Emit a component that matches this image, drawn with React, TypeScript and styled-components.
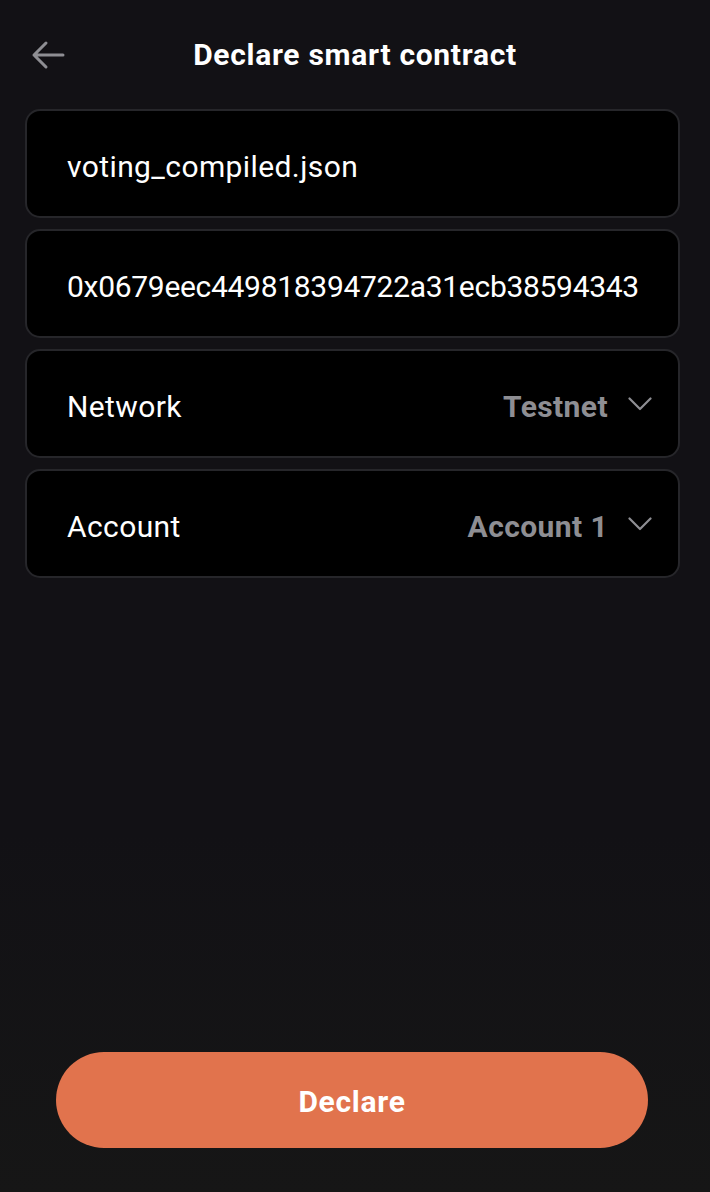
import React from "react";
import styled, { createGlobalStyle } from "styled-components";

const Global = createGlobalStyle`
  html, body { margin: 0; padding: 0; background: #121115; }
  body { font-family: "Roboto", "Inter", sans-serif; }
`;

const Page = styled.div`
  width: 710px;
  height: 1192px;
  box-sizing: border-box;
  display: flex;
  flex-direction: column;
  background: linear-gradient(180deg, #121115 0%, #121115 70%, #161616 100%);
  color: #fff;
`;

const Header = styled.header`
  height: 109px;
  display: grid;
  grid-template-columns: 96px 1fr 96px;
  align-items: center;
`;

const BackButton = styled.button`
  background: none;
  border: none;
  padding: 0 0 0 31px;
  display: flex;
  align-items: center;
  color: #8e8e93;
  cursor: pointer;
`;

const Title = styled.h1`
  margin: 0;
  text-align: center;
  font-size: 30px;
  font-weight: 700;
  letter-spacing: 0.7px;
  color: #fff;
`;

const Fields = styled.div`
  display: flex;
  flex-direction: column;
  gap: 11px;
  padding: 0 30px 0 25px;
`;

const Card = styled.div<{ $tight?: boolean }>`
  height: 109px;
  box-sizing: border-box;
  background: #000;
  border: 2px solid #26262a;
  border-radius: 15px;
  display: flex;
  align-items: center;
  justify-content: space-between;
  padding: 5px 26px 0 40px;
  font-size: 30px;
  letter-spacing: ${(p) => (p.$tight ? "-0.3px" : "0.4px")};
  color: #fff;
`;

const Value = styled.span<{ $muted?: boolean }>`
  display: flex;
  align-items: center;
  gap: 20px;
  font-weight: ${(p) => (p.$muted ? 700 : 400)};
  color: ${(p) => (p.$muted ? "#8e8e93" : "#fff")};

  svg {
    margin-bottom: 4px;
  }
`;

const Spacer = styled.div`
  flex: 1;
`;

const Footer = styled.div`
  padding: 0 62px 44px 56px;
`;

const DeclareButton = styled.button`
  width: 100%;
  height: 96px;
  border: none;
  border-radius: 48px;
  background: #e1734d;
  color: #fff;
  font-family: "Roboto", "Inter", sans-serif;
  font-size: 30px;
  font-weight: 700;
  letter-spacing: 0.7px;
  padding-top: 4px;
  cursor: pointer;
`;

const Chevron = () => (
  <svg width="24" height="14" viewBox="0 0 24 14" fill="none" stroke="#8e8e93" strokeWidth="2.2" strokeLinecap="round" strokeLinejoin="round">
    <path d="M1.5 1.5L12 12L22.5 1.5" />
  </svg>
);

const Arrow = () => (
  <svg width="34" height="30" viewBox="0 0 34 30" fill="none" stroke="#8e8e93" strokeWidth="3" strokeLinecap="round" strokeLinejoin="round">
    <path d="M32 15H3M15 3L3 15l12 12" />
  </svg>
);

export default function App() {
  return (
    <Page>
      <Global />
      <Header>
        <BackButton aria-label="Back">
          <Arrow />
        </BackButton>
        <Title>Declare smart contract</Title>
        <div />
      </Header>
      <Fields>
        <Card>voting_compiled.json</Card>
        <Card $tight>0x0679eec449818394722a31ecb38594343</Card>
        <Card>
          <span>Network</span>
          <Value $muted>
            Testnet
            <Chevron />
          </Value>
        </Card>
        <Card>
          <span>Account</span>
          <Value $muted>
            Account 1
            <Chevron />
          </Value>
        </Card>
      </Fields>
      <Spacer />
      <Footer>
        <DeclareButton>Declare</DeclareButton>
      </Footer>
    </Page>
  );
}
